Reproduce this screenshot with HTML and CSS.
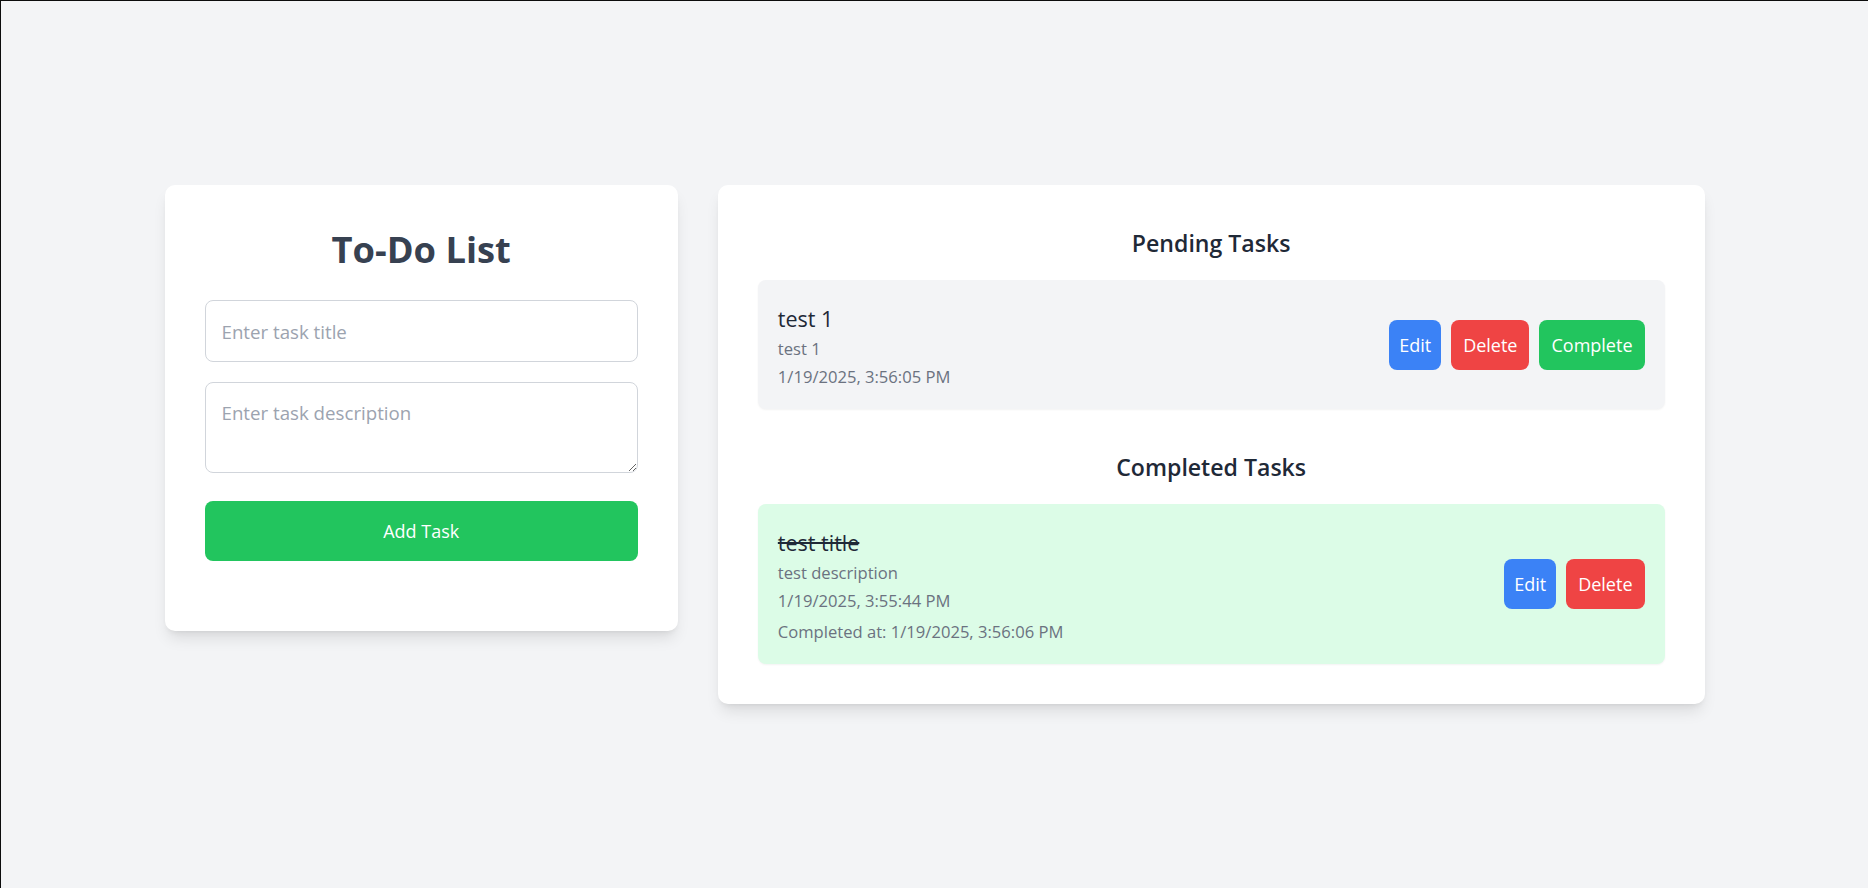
FILE: index.html
```html
<!DOCTYPE html>
<html lang="en">
<head>
<meta charset="utf-8">
<title>To-Do List</title>
<link rel="stylesheet" href="styles.css">
</head>
<body>
<div class="page">
  <div class="layout">
    <section class="card form-card">
      <h1 class="app-title">To-Do List</h1>
      <form class="task-form">
        <input class="field" type="text" placeholder="Enter task title">
        <textarea class="field field-area" placeholder="Enter task description"></textarea>
        <button type="button" class="btn-add">Add Task</button>
      </form>
    </section>
    <section class="card list-card">
      <h2 class="section-title">Pending Tasks</h2>
      <div class="task task-pending">
        <div class="task-text">
          <h3 class="task-title">test 1</h3>
          <p class="task-meta">test 1</p>
          <p class="task-meta">1/19/2025, 3:56:05 PM</p>
        </div>
        <div class="task-actions">
          <button class="btn btn-edit">Edit</button>
          <button class="btn btn-delete">Delete</button>
          <button class="btn btn-complete">Complete</button>
        </div>
      </div>
      <h2 class="section-title section-gap">Completed Tasks</h2>
      <div class="task task-done">
        <div class="task-text">
          <h3 class="task-title done">test title</h3>
          <p class="task-meta">test description</p>
          <p class="task-meta">1/19/2025, 3:55:44 PM</p>
          <p class="task-meta completed-at">Completed at: 1/19/2025, 3:56:06 PM</p>
        </div>
        <div class="task-actions">
          <button class="btn btn-edit">Edit</button>
          <button class="btn btn-delete">Delete</button>
        </div>
      </div>
    </section>
  </div>
</div>
</body>
</html>
```

FILE: styles.css
```css
html {
  border-top: 1px solid #0c0c0c;
  border-left: 1px solid #0c0c0c;
  background: #f3f4f6;
}
* { box-sizing: border-box; }
body {
  margin: 0;
  font-family: "Open Sans", "Noto Sans", sans-serif;
  color: #1f2937;
  background: #f3f4f6;
}
.page {
  min-height: 887px;
  display: flex;
  align-items: center;
  justify-content: center;
}
.layout {
  width: 1540px;
  display: flex;
  align-items: flex-start;
  gap: 40px;
}
.card {
  background: #ffffff;
  border-radius: 10px;
  padding: 40px;
  box-shadow: 0 10px 15px -3px rgba(0,0,0,0.1), 0 4px 6px -4px rgba(0,0,0,0.1);
}
.form-card {
  flex: 0 0 33.3333%;
}
.list-card {
  flex: 1 1 auto;
}
.app-title {
  margin: 0 0 27px;
  font-size: 36.3px;
  line-height: 48px;
  font-weight: 700;
  color: #374151;
  text-align: center;
}
.task-form {
  display: flex;
  flex-direction: column;
  margin-bottom: 30px;
}
.field {
  display: block;
  width: 100%;
  height: 62px;
  padding: 16px;
  border: 1px solid #d1d5db;
  border-radius: 8px;
  font-family: inherit;
  font-size: 18.7px;
  line-height: 28px;
  color: #1f2937;
  background: #fff;
  outline: none;
}
.field::placeholder { color: #9ca3af; }
.field-area {
  margin-top: 20px;
  height: 91px;
  resize: vertical;
}
.btn-add {
  margin-top: 28px;
  height: 60px;
  border: 0;
  border-radius: 8px;
  background: #22c55e;
  color: #fff;
  font-family: inherit;
  font-size: 18px;
  line-height: 28px;
}
.section-title {
  margin: 0 0 19px;
  font-size: 23.1px;
  line-height: 36px;
  font-weight: 600;
  color: #1f2937;
  text-align: center;
}
.section-gap { margin-top: 40px; }
.task {
  display: flex;
  align-items: center;
  justify-content: space-between;
  padding: 20px;
  border-radius: 8px;
  box-shadow: 0 1px 2px rgba(0,0,0,0.05);
}
.task-pending { background: #f3f4f6; }
.task-done { background: #dcfce7; }
.task-title {
  margin: 4.5px 0 0;
  font-size: 21.5px;
  line-height: 28.5px;
  font-weight: 400;
  color: #1f2937;
}
.task-title.done { text-decoration: line-through; }
.task-meta {
  margin: 4px 0 0;
  font-size: 16.6px;
  line-height: 24px;
  color: #6b7280;
}
.completed-at { margin-top: 7px; }
.task-actions {
  display: flex;
  gap: 10px;
}
.btn {
  height: 50px;
  padding: 0 12px;
  border: 0;
  border-radius: 8px;
  color: #fff;
  font-family: inherit;
  font-size: 18px;
  line-height: 50px;
}
.btn-edit { background: #3b82f6; padding: 0 10px; }
.btn-delete { background: #ef4444; }
.btn-complete { background: #22c55e; }
```
